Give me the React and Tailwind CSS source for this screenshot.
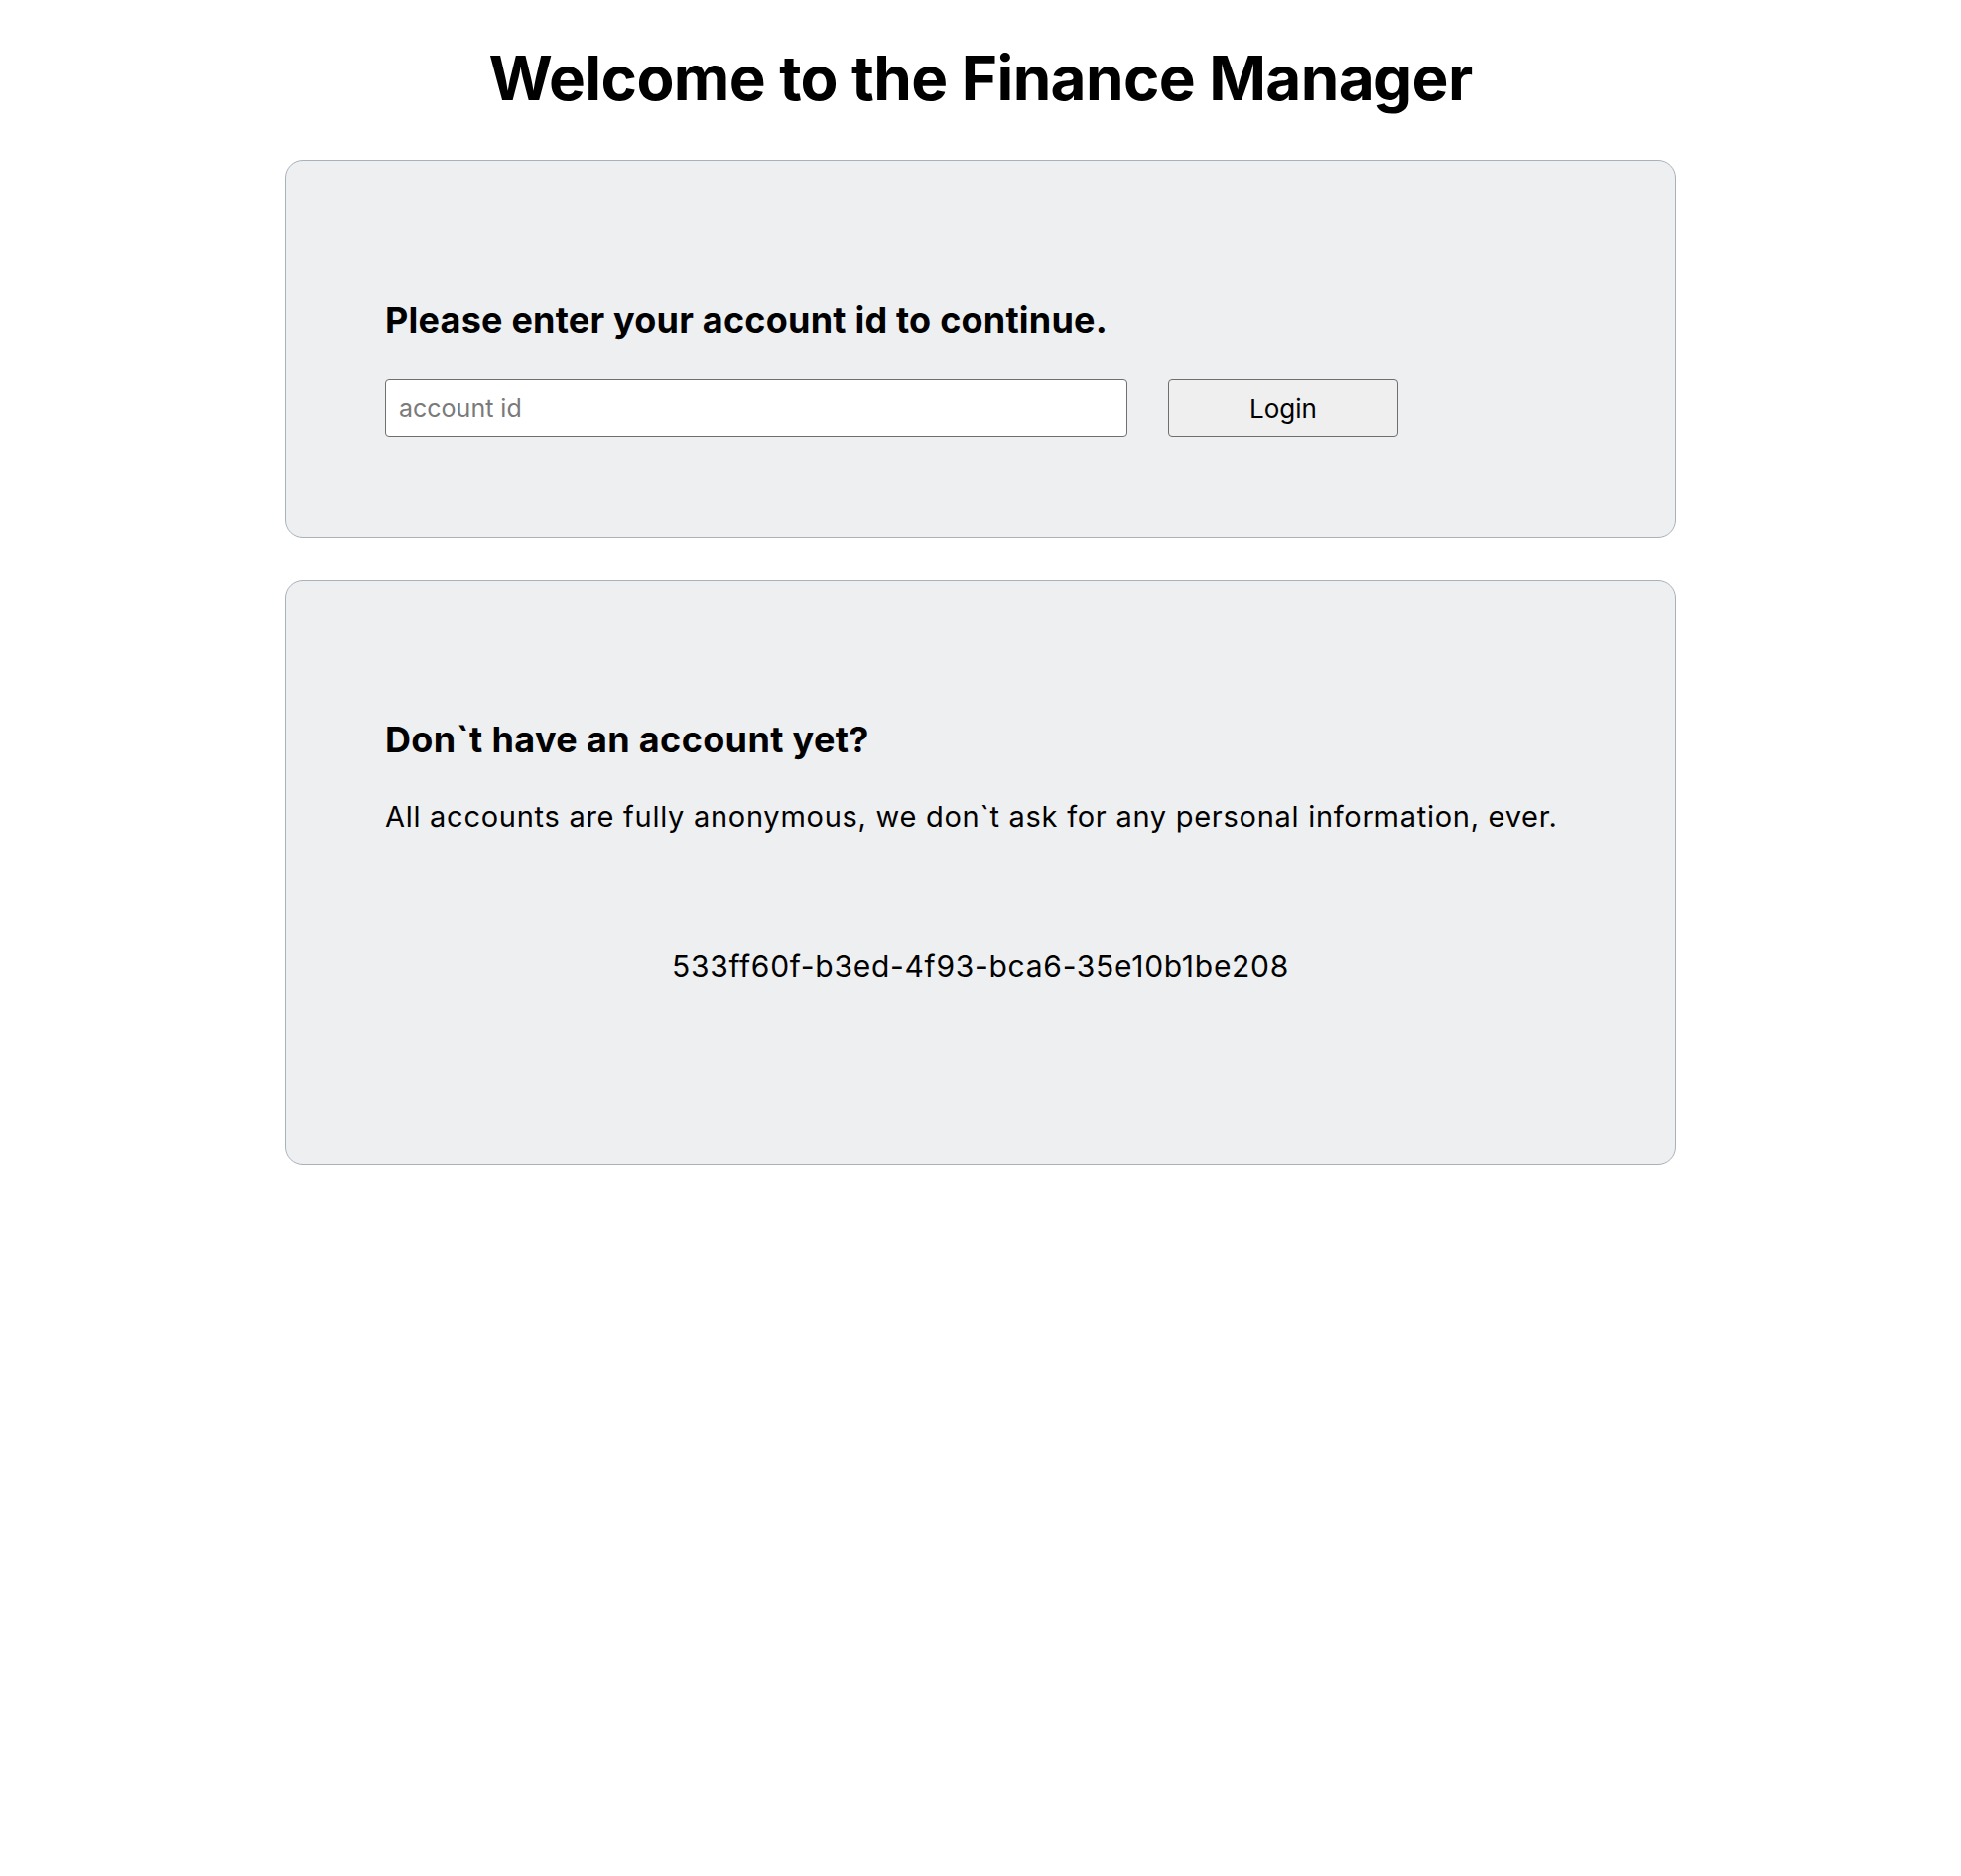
export default function App() {
    return (
        <div className="min-h-[1890px] bg-white font-['Inter',sans-serif] text-black">
            {/* --- HEADER --- */}
            <h1 className="pt-[41px] text-center text-[62px] font-bold leading-[76px] tracking-[-0.01em]">
                Welcome to the Finance Manager
            </h1>

            <div className="mx-auto mt-[44px] flex w-[1402px] flex-col gap-[42px]">
                {/* --- LOGIN --- */}
                <div className="rounded-[18px] border border-[#a9b1b9] bg-[#eeeff1] px-[100px] pt-[138px] pb-[101px]">
                    <h2 className="text-[36px] font-bold leading-[44px] tracking-[0.006em]">
                        Please enter your account id to continue.
                    </h2>
                    <div className="mt-[38px] flex items-center gap-[41px]">
                        <input
                            type="text"
                            placeholder="account id"
                            className="h-[58px] w-[748px] rounded-[4px] border border-[#6f6f6f] bg-white px-[13px] text-[25px] placeholder:text-[#7a7a7a] focus:outline-none"
                        />
                        <button className="h-[58px] w-[232px] rounded-[4px] border border-[#6f6f6f] bg-[#efefef] text-[26px]">
                            Login
                        </button>
                    </div>
                </div>

                {/* --- REGISTER --- */}
                <div className="rounded-[18px] border border-[#a9b1b9] bg-[#eeeff1] px-[100px] pt-[138px] pb-[178px]">
                    <h2 className="text-[36px] font-bold leading-[44px] tracking-[0.01em]">
                        Don`t have an account yet?
                    </h2>
                    <p className="mt-[36px] text-[29px] leading-[40px] tracking-[0.025em]">
                        All accounts are fully anonymous, we don`t ask for any personal information, ever.
                    </p>
                    <p className="mt-[108px] text-center text-[30px] leading-[44px] tracking-[0.024em]">
                        533ff60f-b3ed-4f93-bca6-35e10b1be208
                    </p>
                </div>
            </div>
        </div>
    );
}
